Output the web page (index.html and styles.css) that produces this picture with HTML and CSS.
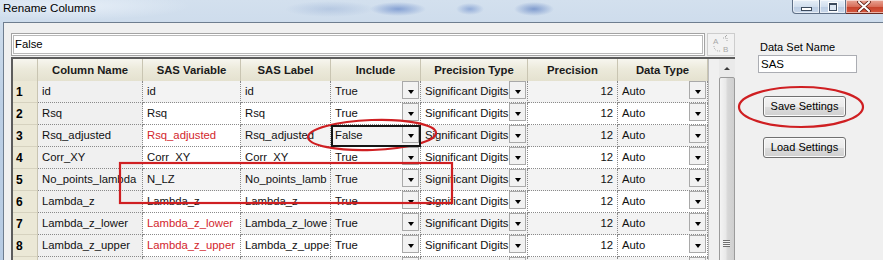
FILE: index.html
```html
<!DOCTYPE html>
<html>
<head>
    <title>Rename Columns</title>
    <link rel="stylesheet" href="styles.css">
</head>
<body>
<div class="window">
    <div class="titlebar">
        <span class="title">Rename Columns</span>
        <div class="controls">
            <div class="ctl min"><span class="min-bar"></span></div>
            <div class="ctl max"><span class="max-box"></span></div>
            <div class="ctl close">
                <svg width="14" height="11" viewBox="0 0 14 11">
                    <path d="M2 1 L12 10 M12 1 L2 10" stroke="#5b1c12" stroke-width="3.6" stroke-linecap="round"/>
                    <path d="M2 1 L12 10 M12 1 L2 10" stroke="#fff" stroke-width="2" stroke-linecap="round"/>
                </svg>
            </div>
        </div>
    </div>
    <div class="frame">
        <div class="main">
            <div class="filter-row">
                <div class="filter">False</div>
                <div class="ab-btn">
                    <svg width="26" height="21" viewBox="0 0 26 21">
                        <text x="5" y="10" class="ab-txt">A</text>
                        <text x="15" y="18" class="ab-txt">B</text>
                        <path d="M15 4 L19 4 L19 8" fill="none" stroke="#a8a8a8" stroke-dasharray="1 1"/>
                        <path d="M17 3 L19 1" stroke="#a8a8a8"/>
                        <path d="M6 12 Q6 16 10 17 L13 17" fill="none" stroke="#a8a8a8" stroke-dasharray="1 1"/>
                    </svg>
                </div>
            </div>
            <div class="grid-box">
                <div class="grid">
                    <div class="row head">
                        <div class="hc"></div>
                        <div class="hc">Column Name</div>
                        <div class="hc">SAS Variable</div>
                        <div class="hc">SAS Label</div>
                        <div class="hc">Include</div>
                        <div class="hc">Precision Type</div>
                        <div class="hc">Precision</div>
                        <div class="hc">Data Type</div>
                    </div>
                    <div class="row odd">
                        <div class="rn">1</div>
                        <div class="c ro">id</div>
                        <div class="c">id</div>
                        <div class="c">id</div>
                        <div class="c dd">True<span class="arrow"></span></div>
                        <div class="c dd">Significant Digits<span class="arrow"></span></div>
                        <div class="c num">12</div>
                        <div class="c dd">Auto<span class="arrow"></span></div>
                    </div>
                    <div class="row even">
                        <div class="rn">2</div>
                        <div class="c ro">Rsq</div>
                        <div class="c">Rsq</div>
                        <div class="c">Rsq</div>
                        <div class="c dd">True<span class="arrow"></span></div>
                        <div class="c dd">Significant Digits<span class="arrow"></span></div>
                        <div class="c num">12</div>
                        <div class="c dd">Auto<span class="arrow"></span></div>
                    </div>
                    <div class="row odd">
                        <div class="rn">3</div>
                        <div class="c ro">Rsq_adjusted</div>
                        <div class="c red">Rsq_adjusted</div>
                        <div class="c">Rsq_adjusted</div>
                        <div class="c dd focus">False<span class="arrow"></span></div>
                        <div class="c dd">Significant Digits<span class="arrow"></span></div>
                        <div class="c num">12</div>
                        <div class="c dd">Auto<span class="arrow"></span></div>
                    </div>
                    <div class="row even">
                        <div class="rn">4</div>
                        <div class="c ro">Corr_XY</div>
                        <div class="c">Corr_XY</div>
                        <div class="c">Corr_XY</div>
                        <div class="c dd">True<span class="arrow"></span></div>
                        <div class="c dd">Significant Digits<span class="arrow"></span></div>
                        <div class="c num">12</div>
                        <div class="c dd">Auto<span class="arrow"></span></div>
                    </div>
                    <div class="row odd">
                        <div class="rn">5</div>
                        <div class="c ro">No_points_lambda</div>
                        <div class="c">N_LZ</div>
                        <div class="c">No_points_lamb</div>
                        <div class="c dd">True<span class="arrow"></span></div>
                        <div class="c dd">Significant Digits<span class="arrow"></span></div>
                        <div class="c num">12</div>
                        <div class="c dd">Auto<span class="arrow"></span></div>
                    </div>
                    <div class="row even">
                        <div class="rn">6</div>
                        <div class="c ro">Lambda_z</div>
                        <div class="c">Lambda_z</div>
                        <div class="c">Lambda_z</div>
                        <div class="c dd">True<span class="arrow"></span></div>
                        <div class="c dd">Significant Digits<span class="arrow"></span></div>
                        <div class="c num">12</div>
                        <div class="c dd">Auto<span class="arrow"></span></div>
                    </div>
                    <div class="row odd">
                        <div class="rn">7</div>
                        <div class="c ro">Lambda_z_lower</div>
                        <div class="c red">Lambda_z_lower</div>
                        <div class="c">Lambda_z_lowe</div>
                        <div class="c dd">True<span class="arrow"></span></div>
                        <div class="c dd">Significant Digits<span class="arrow"></span></div>
                        <div class="c num">12</div>
                        <div class="c dd">Auto<span class="arrow"></span></div>
                    </div>
                    <div class="row even">
                        <div class="rn">8</div>
                        <div class="c ro">Lambda_z_upper</div>
                        <div class="c red">Lambda_z_upper</div>
                        <div class="c">Lambda_z_uppe</div>
                        <div class="c dd">True<span class="arrow"></span></div>
                        <div class="c dd">Significant Digits<span class="arrow"></span></div>
                        <div class="c num">12</div>
                        <div class="c dd">Auto<span class="arrow"></span></div>
                    </div>
                    <div class="row odd">
                        <div class="rn"></div>
                        <div class="c ro"></div>
                        <div class="c"></div>
                        <div class="c"></div>
                        <div class="c dd"><span></span><span class="arrow"></span></div>
                        <div class="c dd"><span></span><span class="arrow"></span></div>
                        <div class="c num"></div>
                        <div class="c dd"><span></span><span class="arrow"></span></div>
                    </div>
                </div>
                <div class="grid-gap"></div>
                <div class="vscroll">
                    <div class="sb-up"><span class="up-tri"></span></div>
                    <div class="sb-thumb">
                        <span class="grip"></span>
                    </div>
                </div>
            </div>
        </div>
        <div class="side">
            <div class="side-label">Data Set Name</div>
            <div class="side-input">SAS</div>
            <div class="btn save">Save Settings</div>
            <div class="btn load">Load Settings</div>
        </div>
    </div>
    <!-- red hand drawn marks laid over the screenshot -->
    <svg class="marks" width="883" height="260" viewBox="0 0 883 260">
        <ellipse cx="372" cy="135" rx="64" ry="15" transform="rotate(-2 372 135)"/>
        <rect x="120" y="163" width="332" height="40"/>
        <ellipse cx="801" cy="107" rx="62" ry="20"/>
    </svg>
</div>
</body>
</html>
```

FILE: styles.css
```css
body{
    margin: 0;
    padding: 0;
    overflow: hidden;
    font-family: "Liberation Sans", Arial, sans-serif;
}

.window{
    position: relative;
    width: 883px;
    height: 260px;
    overflow: hidden;
    background: linear-gradient(180deg, #d3e0ee 0%, #bccfe5 40%, #b7cbe3 100%);
}

.titlebar{
    position: relative;
    height: 22px;
    background:
        radial-gradient(ellipse 28px 7px at 398px 9px, rgba(70,110,190,.55), rgba(70,110,190,0)),
        radial-gradient(ellipse 14px 6px at 470px 9px, rgba(70,110,190,.45), rgba(70,110,190,0)),
        radial-gradient(ellipse 20px 7px at 534px 9px, rgba(60,100,180,.55), rgba(60,100,180,0)),
        radial-gradient(ellipse 45px 8px at 330px 9px, rgba(120,150,200,.3), rgba(120,150,200,0)),
        radial-gradient(ellipse 120px 14px at 70px 6px, rgba(235,242,250,.8), rgba(235,242,250,0));
}
.title{
    position: absolute;
    left: 3px;
    top: 1px;
    font-size: 11.6px;
    color: #000;
}
.controls{
    position: absolute;
    right: -10px;
    top: 0;
    display: flex;
}
.ctl{
    height: 14px;
    box-sizing: border-box;
    border: 1px solid #5f7087;
    border-top: none;
    display: flex;
    align-items: center;
    justify-content: center;
    box-shadow: inset 0 0 0 1px rgba(255,255,255,.55);
}
.min{
    width: 28px;
    border-radius: 0 0 0 4px;
    background: linear-gradient(180deg, #e6eef7 0%, #d2dfee 50%, #bccde3 51%, #c9d8ea 100%);
}
.max{
    width: 26px;
    border-left: none;
    background: linear-gradient(180deg, #e6eef7 0%, #d2dfee 50%, #bccde3 51%, #c9d8ea 100%);
}
.close{
    width: 47px;
    border-left: none;
    background: linear-gradient(180deg, #e9a696 0%, #d86f5a 50%, #c5412a 51%, #d6563c 100%);
    border-color: #6b2a20;
    justify-content: flex-start;
    padding-left: 11px;
}
.min-bar{
    width: 9px;
    height: 2px;
    margin-top: 4px;
    background: #fff;
    border: 1px solid #3c4a5c;
}
.max-box{
    width: 6px;
    height: 5px;
    border: 1px solid #3c4a5c;
    border-top-width: 2px;
    box-shadow: 0 0 0 1px #fff;
    background: #dde7f2;
}

.frame{
    display: flex;
    height: 237px;
    margin-left: 3px;
    border-left: 1px solid #6e7d8f;
    border-top: 1px solid #6e7d8f;
    background: #f0f0f0;
}

.main{
    width: 724px;
    padding: 10px 0 0 7px;
}

.filter-row{
    display: flex;
    height: 23px;
    margin-bottom: 1px;
}
.filter{
    width: 694px;
    box-sizing: border-box;
    border: 1px solid #a3a3a3;
    background: #fff;
    box-shadow: inset 0 0 0 1px #fff, inset 0 0 0 2px #b9b9b9;
    font-size: 11.3px;
    line-height: 20px;
    padding-left: 3px;
}
.ab-btn{
    width: 28px;
    margin-left: 2px;
    box-sizing: border-box;
    border: 1px solid #cdcdcd;
    background: #f2f2f2;
}
.ab-txt{
    font-size: 8px;
    fill: #a8a8a8;
    font-family: "Liberation Sans", Arial, sans-serif;
}

.grid-box{
    display: flex;
    border-top: 2px solid #5c5c5c;
    border-left: 2px solid #5c5c5c;
    height: 220px;
    overflow: hidden;
}
.grid{
    width: 695px;
    font-size: 11.3px;
}
.row{
    display: grid;
    grid-template-columns: 25px 105px 98px 90px 90px 107px 90px 90px;
    height: 22px;
}
.hc{
    box-sizing: border-box;
    background: linear-gradient(180deg, #f7f6ef 0%, #eceadb 45%, #e4e1cf 100%);
    border-right: 1px solid #c9c5b2;
    border-bottom: 1px solid #b9b5a0;
    font-weight: bold;
    text-align: center;
    line-height: 22px;
    color: #1a1a1a;
}
.rn{
    box-sizing: border-box;
    background: #ebe8d6;
    border-right: 1px solid #c9c5b2;
    border-bottom: 1px solid #d6d2bf;
    font-weight: bold;
    font-size: 12px;
    padding: 4px 0 0 3px;
}
.c{
    position: relative;
    box-sizing: border-box;
    border-right: 1px dotted #8a8a8a;
    border-bottom: 1px dotted #8a8a8a;
    padding-left: 4px;
    line-height: 20px;
    white-space: nowrap;
    overflow: hidden;
    color: #111;
}
.odd .c{
    background: #f3f3f3;
}
.even .c{
    background: #fff;
}
.c.ro{
    background: #f0f0f0;
}
.c.red{
    color: #d3262c;
    background: #fff;
}
.c.num{
    text-align: right;
    padding-right: 4px;
}
.c.dd{
    display: flex;
    justify-content: space-between;
    align-items: flex-start;
    padding-right: 1px;
}
.c.focus{
    outline: 2px solid #151515;
    outline-offset: -2px;
    z-index: 1;
}
.arrow{
    flex: none;
    width: 17px;
    height: 18px;
    box-sizing: border-box;
    border: 1px solid #a9a9a9;
    background: #f2f2f2;
    display: flex;
    justify-content: center;
    padding-top: 8px;
}
.arrow::after{
    content: "";
    width: 0;
    height: 0;
    border-left: 3.5px solid transparent;
    border-right: 3.5px solid transparent;
    border-top: 4px solid #000;
}

.grid-gap{
    width: 10px;
    background: #f0f0f0;
    border-left: 1px solid #bdbdbd;
}
.vscroll{
    width: 17px;
    background: #eaeaea;
}
.sb-up{
    height: 18px;
    display: flex;
    justify-content: center;
    padding-top: 8px;
    box-sizing: border-box;
}
.up-tri{
    width: 0;
    height: 0;
    border-left: 3px solid transparent;
    border-right: 3px solid transparent;
    border-bottom: 3px solid #3a3a3a;
}
.sb-thumb{
    height: 240px;
    box-sizing: border-box;
    border: 1px solid #9b9b9b;
    border-radius: 2px;
    background: linear-gradient(90deg, #f4f4f4 0%, #e9e9e9 40%, #d7d7d7 55%, #cfcfcf 100%);
    display: flex;
    justify-content: center;
    padding-top: 162px;
}
.grip{
    width: 7px;
    height: 7px;
    background: repeating-linear-gradient(180deg, #6f6f6f 0 1px, #f4f4f4 1px 2px);
}

.side{
    padding: 17px 0 0 23px;
    font-size: 11px;
}
.side-label{
    margin-left: 2px;
    height: 14px;
    line-height: 14px;
}
.side-input{
    width: 99px;
    height: 18px;
    margin-top: 1px;
    box-sizing: border-box;
    border: 1px solid #abadb3;
    background: #fff;
    font-size: 11.5px;
    line-height: 16px;
    padding-left: 2px;
}
.btn{
    width: 83px;
    height: 21px;
    margin-left: 5px;
    box-sizing: border-box;
    border: 1px solid #707070;
    border-radius: 3px;
    background: linear-gradient(180deg, #f3f3f3 0%, #ebebeb 50%, #dddddd 51%, #cfcfcf 100%);
    box-shadow: inset 0 0 0 1px #fbfbfb;
    text-align: center;
    line-height: 19px;
    font-size: 11px;
}
.save{
    margin-top: 23px;
}
.load{
    margin-top: 20px;
}

.marks{
    position: absolute;
    left: 0;
    top: 0;
    pointer-events: none;
}
.marks ellipse, .marks rect{
    fill: none;
    stroke: #cf1f22;
    stroke-width: 2.2;
}
```
